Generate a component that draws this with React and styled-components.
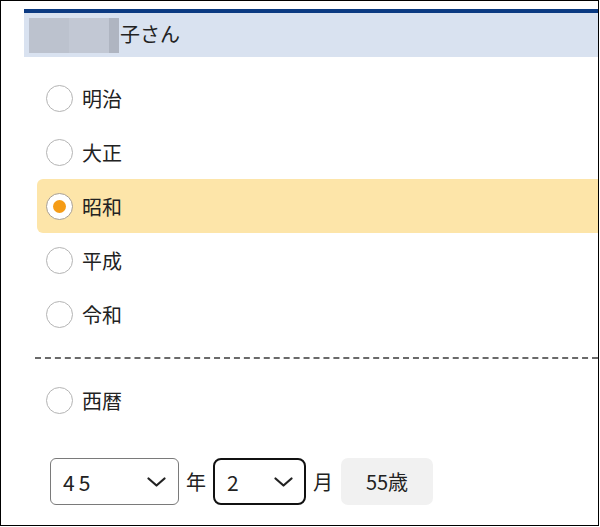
import React, { useState } from "react";
import styled, { createGlobalStyle } from "styled-components";

const GlobalStyle = createGlobalStyle`
  html, body {
    margin: 0;
    padding: 0;
    background: #fff;
  }
  body {
    font-family: "Noto Sans CJK JP", "Noto Sans", sans-serif;
    color: #222;
  }
`;

const ERAS = ["明治", "大正", "昭和", "平成", "令和"];

const Frame = styled.div`
  box-sizing: border-box;
  width: 599px;
  height: 526px;
  border: 1px solid #000;
  padding-top: 8px;
  display: flex;
  flex-direction: column;
  overflow: hidden;
`;

const Header = styled.div`
  box-sizing: border-box;
  margin-left: 23px;
  height: 48px;
  border-top: 4px solid #0b3a82;
  background: #d9e2f0;
  display: flex;
  align-items: center;
  padding: 0 0 3px 5px;
  font-size: 20px;
  color: #222;
`;

const Masked = styled.span`
  width: 90px;
  height: 35px;
  margin: 3px 1px 0 0;
  background: linear-gradient(
    to right,
    #bcc2ce 0,
    #bcc2ce 40px,
    #c2c8d4 40px,
    #c2c8d4 80px,
    #afb5c1 80px
  );
`;

const List = styled.div`
  margin-top: ${(p) => p.$top}px;
  display: flex;
  flex-direction: column;
`;

const Row = styled.label`
  height: 54px;
  margin-left: 36px;
  padding-left: 9px;
  display: flex;
  align-items: center;
  gap: 9px;
  border-radius: 6px 0 0 6px;
  background: ${(p) => (p.$checked ? "#fde5a9" : "transparent")};
  font-size: 20px;
  cursor: pointer;
`;

const Circle = styled.span`
  box-sizing: border-box;
  width: 27px;
  height: 27px;
  border-radius: 50%;
  border: 1.5px solid ${(p) => (p.$checked ? "#a89f92" : "#b4b4b4")};
  background: #fff;
  display: flex;
  align-items: center;
  justify-content: center;
  &::after {
    content: "";
    width: 13px;
    height: 13px;
    border-radius: 50%;
    background: ${(p) => (p.$checked ? "#f59c16" : "transparent")};
  }
`;

const Divider = styled.hr`
  margin: 16px 0 14px 34px;
  border: none;
  border-top: 2px dashed #6a6a6a;
  height: 0;
`;

const DateRow = styled.div`
  margin-top: 31px;
  margin-left: 49px;
  display: flex;
  align-items: center;
  gap: 7px;
  font-size: 20px;
`;

const SelectWrap = styled.div`
  position: relative;
  width: ${(p) => p.$width}px;
  height: 47px;
`;

const Select = styled.select`
  appearance: none;
  box-sizing: border-box;
  width: 100%;
  height: 100%;
  border: ${(p) => (p.$focused ? "2px solid #111" : "1px solid #7a7a7a")};
  border-radius: ${(p) => (p.$focused ? "8px" : "6px")};
  background: #fff;
  padding: 0 0 0 12px;
  font-family: "Noto Sans CJK JP", "Noto Sans", sans-serif;
  font-size: 21px;
  letter-spacing: 4px;
  color: #222;
  outline: none;
`;

const Chevron = styled.svg`
  position: absolute;
  right: 13px;
  top: 19px;
  pointer-events: none;
`;

const Age = styled.div`
  width: 92px;
  height: 47px;
  margin-left: 1px;
  border-radius: 7px;
  background: #f1f1f1;
  display: flex;
  align-items: center;
  justify-content: center;
  font-size: 20px;
`;

const Arrow = () => (
  <Chevron width="19" height="10" viewBox="0 0 19 10">
    <path d="M1.5 1.5 L9.5 8.5 L17.5 1.5" fill="none" stroke="#222" strokeWidth="2.2" strokeLinecap="round" strokeLinejoin="round" />
  </Chevron>
);

export default function App() {
  const [era, setEra] = useState("昭和");
  const [year, setYear] = useState("45");
  const [month, setMonth] = useState("2");

  const renderRow = (name) => (
    <Row key={name} $checked={era === name} onClick={() => setEra(name)}>
      <Circle $checked={era === name} />
      {name}
    </Row>
  );

  return (
    <>
      <GlobalStyle />
      <Frame>
        <Header>
          <Masked />
          子さん
        </Header>
        <List $top={14}>{ERAS.map(renderRow)}</List>
        <Divider />
        <List $top={0}>{renderRow("西暦")}</List>
        <DateRow>
          <SelectWrap $width={129}>
            <Select value={year} onChange={(e) => setYear(e.target.value)}>
              {Array.from({ length: 64 }, (_, i) => String(i + 1)).map((y) => (
                <option key={y} value={y}>{y}</option>
              ))}
            </Select>
            <Arrow />
          </SelectWrap>
          年
          <SelectWrap $width={93}>
            <Select $focused value={month} onChange={(e) => setMonth(e.target.value)}>
              {Array.from({ length: 12 }, (_, i) => String(i + 1)).map((m) => (
                <option key={m} value={m}>{m}</option>
              ))}
            </Select>
            <Arrow />
          </SelectWrap>
          月
          <Age>55歳</Age>
        </DateRow>
      </Frame>
    </>
  );
}
